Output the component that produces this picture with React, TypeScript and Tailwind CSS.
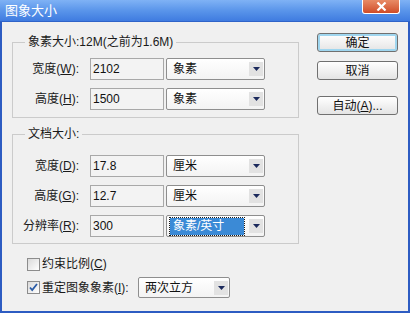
import React from 'react';

const font = "font-['Liberation_Sans','Noto_Sans_CJK_SC',sans-serif]";

function Arrow() {
  return (
    <svg width="7" height="4" viewBox="0 0 7 4">
      <path d="M0 0h7L3.5 4z" fill="#1c2a5c" />
    </svg>
  );
}

function Select({ value, width, hl }: { value: string; width: string; hl?: boolean }) {
  return (
    <div className={`${width} h-[22px] border border-[#8e8e8e] rounded-[2px] bg-gradient-to-b from-white to-[#f3f3f3] flex items-center pl-[3px] pr-[1px]`}>
      <div
        className={`flex-1 h-[17px] flex items-center px-[3px] mr-[5px] ${
          hl ? 'bg-[#3b8ad6] text-white outline-1 outline-dotted outline-[#1a1a1a]' : 'text-[#111]'
        }`}
      >
        {value}
      </div>
      <div className="w-[14px] h-[14px] bg-[#e2e2e2] flex items-center justify-center">
        <Arrow />
      </div>
    </div>
  );
}

function Row({ label, mn, value, unit, hl }: any) {
  return (
    <div className="flex items-center h-[22px]">
      <div className="w-[66px] text-right whitespace-nowrap">
        {label}(<u>{mn}</u>):
      </div>
      <div className="ml-[11px] w-[74px] h-[22px] border border-[#a8a8a8] bg-[#f3f3f3] flex items-center px-[2px] text-[#111]">
        {value}
      </div>
      <div className="ml-[2px]">
        <Select value={unit} width="w-[99px]" hl={hl} />
      </div>
    </div>
  );
}

function Group({ title, children, className }: any) {
  return (
    <div className={`border border-[#cbcbcb] ${className}`}>
      <div className="-mt-[8px] ml-[12px] px-[3px] w-fit h-[14px] leading-[14px] bg-[#f0f0f0] whitespace-nowrap">{title}</div>
      {children}
    </div>
  );
}

function Check({ checked }: { checked?: boolean }) {
  return (
    <div className="w-[13px] h-[13px] border border-[#8c8c8c] bg-gradient-to-br from-[#dadada] to-white flex items-center justify-center">
      {checked && (
        <svg width="9" height="9" viewBox="0 0 9 9">
          <path d="M1 4.5l2.2 2.5L8 1" fill="none" stroke="#2a5ba6" strokeWidth="1.8" />
        </svg>
      )}
    </div>
  );
}

function Btn({ children, focus }: any) {
  return (
    <button
      className={`w-[81px] h-[19px] rounded-[3px] border border-[#707070] bg-gradient-to-b from-white to-[#e4e4e4] flex items-center justify-center text-[12px] text-[#111] ${
        focus ? 'shadow-[inset_0_0_0_2px_#9fd6ef]' : ''
      }`}
    >
      {children}
    </button>
  );
}

export default function App() {
  return (
    <div className={`w-[410px] h-[313px] flex flex-col ${font} text-[12px] text-[#1a1a1a] leading-[14px]`}>
      {/* title bar */}
      <div className="h-[22px] flex bg-gradient-to-b from-[#7fb2f5] via-[#5a95ea] to-[#3f7be0] border-b border-[#2f63c8]">
        <div className="pl-[5px] pt-[4px] text-[13px] text-white">图象大小</div>
        <div className="ml-auto mr-[10px] w-[38px] h-[14px] rounded-b-[3px] border border-t-0 border-white bg-gradient-to-b from-[#e88b66] to-[#cf4b26] flex items-center justify-center">
          <svg width="11" height="9" viewBox="0 0 11 9">
            <path d="M1.5 0.5l8 8M9.5 0.5l-8 8" stroke="white" strokeWidth="2.2" />
          </svg>
        </div>
      </div>

      <div className="flex-1 flex bg-[#f0f0f0] border-x-2 border-b-2 border-[#2d5cc2]">
        {/* left column */}
        <div className="ml-[10px] w-[287px] flex flex-col">
          <Group title="象素大小:12M(之前为1.6M)" className="mt-[20px] h-[76px]">
            <div className="mt-[9px] flex flex-col gap-[8px]">
              <Row label="宽度" mn="W" value="2102" unit="象素" />
              <Row label="高度" mn="H" value="1500" unit="象素" />
            </div>
          </Group>

          <Group title="文档大小:" className="mt-[16px] h-[110px]">
            <div className="mt-[14px] flex flex-col gap-[8px]">
              <Row label="宽度" mn="D" value="17.8" unit="厘米" />
              <Row label="高度" mn="G" value="12.7" unit="厘米" />
              <Row label="分辨率" mn="R" value="300" unit="象素/英寸" hl />
            </div>
          </Group>

          <div className="mt-[12px] ml-[15px] flex flex-col gap-[5px]">
            <div className="flex items-center h-[16px]">
              <Check />
              <span className="ml-[2px]">
                约束比例(<u>C</u>)
              </span>
            </div>
            <div className="flex items-center h-[21px]">
              <Check checked />
              <span className="ml-[2px] w-[96px] whitespace-nowrap">
                重定图象象素(<u>I</u>):
              </span>
              <div className="h-[21px]">
                <Select value="两次立方" width="w-[92px] !h-[21px]" />
              </div>
            </div>
          </div>
        </div>

        {/* right column */}
        <div className="ml-[18px] mt-[11px] flex flex-col">
          <Btn focus>确定</Btn>
          <div className="mt-[9px]">
            <Btn>取消</Btn>
          </div>
          <div className="mt-[16px]">
            <Btn>
              自动(<u>A</u>)...
            </Btn>
          </div>
        </div>
      </div>
    </div>
  );
}
